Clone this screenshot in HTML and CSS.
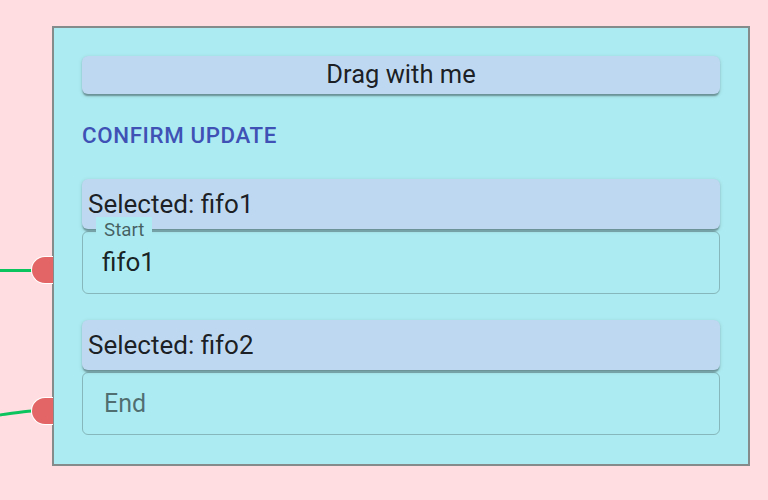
FILE: index.html
```html
<!DOCTYPE html>
<html>
<head>
<meta charset="utf-8">
<link rel="stylesheet" href="styles.css">
</head>
<body>
<div class="canvas">
  <svg class="edges" width="40" height="500" viewBox="0 0 40 500">
    <path d="M0 270.5 L32 270.5" />
    <path d="M0 415 C 12 413.5, 22 411.5, 32 411" />
  </svg>
  <div class="node">
    <div class="drag-btn">Drag with me</div>
    <div class="confirm">Confirm update</div>
    <div class="selected first">Selected: fifo1</div>
    <div class="field">
      <span class="label">Start</span>
      <span class="value">fifo1</span>
    </div>
    <div class="selected second">Selected: fifo2</div>
    <div class="field">
      <span class="placeholder">End</span>
    </div>
  </div>
  <div class="handle h1"></div>
  <div class="handle h2"></div>
</div>
</body>
</html>
```
FILE: styles.css
```css
html, body {
  margin: 0;
  padding: 0;
}
body {
  background: #ffdde0;
  font-family: Roboto, "Liberation Sans", sans-serif;
  color: rgba(0, 0, 0, 0.87);
}
.canvas {
  position: relative;
  width: 768px;
  height: 500px;
  padding: 26px 0 0 52px;
  box-sizing: border-box;
  overflow: hidden;
}
.edges {
  position: absolute;
  left: 0;
  top: 0;
}
.edges path {
  fill: none;
  stroke: #0cc45e;
  stroke-width: 3;
}
.node {
  width: 698px;
  height: 440px;
  box-sizing: border-box;
  border: 2px solid #858a8b;
  background: #acebf1;
  padding: 28px;
  display: flex;
  flex-direction: column;
}
.drag-btn {
  height: 37.5px;
  line-height: 37.5px;
  text-align: center;
  font-size: 25.5px;
  background: #bed8f1;
  border-radius: 6px;
  box-shadow: 0 3px 1.5px -1.5px rgba(0,0,0,.2), 0 1.5px 1.5px rgba(0,0,0,.14), 0 1.5px 4.7px rgba(0,0,0,.12);
}
.confirm {
  margin-top: 13.5px;
  height: 57px;
  line-height: 38.3px;
  padding: 9.4px 0;
  box-sizing: border-box;
  font-size: 22.3px;
  font-weight: 500;
  letter-spacing: 0.02857em;
  text-transform: uppercase;
  color: #3f51b5;
}
.selected {
  height: 50px;
  line-height: 50px;
  font-size: 26px;
  padding-left: 6px;
  background: #bed8f1;
  border-radius: 6px;
  box-shadow: 0 3px 1.5px -1.5px rgba(0,0,0,.2), 0 1.5px 1.5px rgba(0,0,0,.14), 0 1.5px 4.7px rgba(0,0,0,.12);
}
.selected.first {
  margin-top: 15px;
}
.selected.second {
  margin-top: 26.5px;
}
.field {
  position: relative;
  margin-top: 2px;
  height: 62.5px;
  box-sizing: border-box;
  border: 1px solid rgba(0, 0, 0, 0.22);
  border-radius: 6px;
  display: flex;
  align-items: center;
  padding-left: 21px;
  font-size: 25px;
}
.label {
  position: absolute;
  left: 13px;
  top: -15px;
  padding: 0 8px;
  background: #acebf1;
  font-size: 18.75px;
  line-height: 27px;
  color: rgba(0, 0, 0, 0.6);
  z-index: 1;
}
.value {
  font-size: 26px;
  margin-left: -2px;
  color: rgba(0, 0, 0, 0.87);
}
.placeholder {
  color: rgba(0, 0, 0, 0.55);
}
.handle {
  position: absolute;
  left: 31px;
  width: 22px;
  height: 28px;
  box-sizing: border-box;
  background: #e46565;
  border: 1px solid #ffffff;
  border-right: none;
  border-radius: 14px 0 0 14px;
}
.h1 {
  top: 256px;
}
.h2 {
  top: 397px;
}
```
